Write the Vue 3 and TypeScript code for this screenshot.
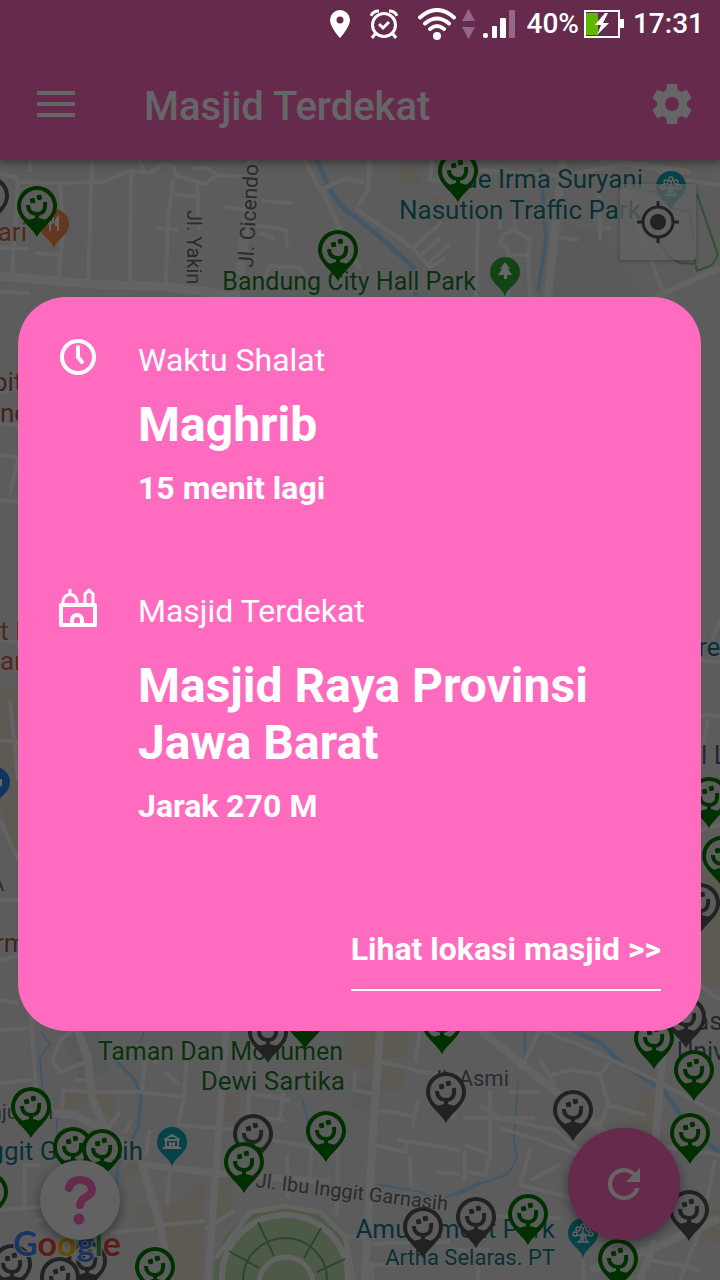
<script setup lang="ts">
interface Pin { x: number; y: number; kind: 'open' | 'closed' }
interface Label { text: string; x: number; y: number; cls: string; size: number; anchor?: 'start' | 'end'; rotate?: number }
interface Road { d: string; w: number }

const appTitle = 'Masjid Terdekat'
const prayer = { label: 'Waktu Shalat', name: 'Maghrib', remaining: '15 menit lagi' }
const nearest = { label: 'Masjid Terdekat', name: 'Masjid Raya Provinsi Jawa Barat', distance: 'Jarak 270 M' }

const roads: Road[] = [
  { d: 'M0 174 15 177 18 182 60 183 103 182 130 171 150 173 163 164 173 166 176 176 205 184 217 175 250 177', w: 4 },
  { d: 'M30 160v12M18 182 12 275M60 182 63 230 58 283M131 171 130 283M173 180 168 218M155 228 178 230M197 182 199 230M174 194 200 197M140 160 144 172', w: 4 },
  { d: 'M92 160 88 284M168 218 166 283M224 206 245 210M262 201 293 203M255 225 286 230 287 248M258 233 275 238', w: 4 },
  { d: 'M193 168 208 168 217 175 206 183M36 253 60 255M0 248 28 248M262 285 270 266 300 268 308 278', w: 4 },
  { d: 'M0 276 90 284 170 287 240 296M253 160 240 275', w: 9 },
  { d: 'M305 160 320 190 345 179 365 182M322 190 345 240 360 270M370 160 368 190 358 206', w: 5 },
  { d: 'M355 208 382 227 413 248 427 264 450 244M413 248 442 222M420 256 440 238M428 268 446 258M432 160 430 180 480 188', w: 4 },
  { d: 'M478 215 476 297M508 297V250L500 244 503 235 514 230 530 240 528 255 530 297M500 230V205M515 230V210M508 255H528', w: 4 },
  { d: 'M563 160 555 230 548 297', w: 8 },
  { d: 'M552 237 578 240M599 195 600 240M600 228H610M480 170 560 176 620 165M640 160 670 178 720 185M625 190 665 297', w: 4 },
  { d: 'M655 297 720 268M600 160 690 172', w: 6 },
  { d: 'M0 292 30 293M0 392 18 390M0 424 18 425M0 455 18 458 10 495M0 500 18 502M0 640 18 642M0 740 18 742M10 700 18 780M0 820 18 860M0 900H18M0 960 18 955M0 1000 18 1003', w: 4 },
  { d: 'M0 1030 32 1028M30 1000 36 1090 34 1112M0 1083 33 1080M52 1060 60 1040 80 1025M52 1060 60 1072 85 1062', w: 4 },
  { d: 'M34 1112 75 1115 105 1130 140 1157 160 1225 170 1280M75 1020 88 1060 92 1098 105 1128', w: 8 },
  { d: 'M62 1113 63 1090 92 1092 140 1092 186 1097M145 1060 142 1090M155 1065 153 1050M188 1040 184 1098 178 1125 240 1130M75 1080H86M165 1072 180 1085M25 1165 24 1207M25 1165H40M0 1210 60 1205M35 1220H60', w: 4 },
  { d: 'M226 1030 208 1280M145 1165 215 1173 330 1182', w: 7 },
  { d: 'M160 1225 205 1221M110 1232 155 1229M170 1170 167 1205M146 1155 150 1130M108 1128 120 1112M125 1133 132 1120M205 1230 235 1210', w: 4 },
  { d: 'M250 1040 248 1130M285 1080 280 1120M250 1093 290 1100M250 1117 285 1120M270 1140 315 1148M312 1130 310 1180M338 1125 337 1215M287 1155V1198M240 1160 265 1175', w: 4 },
  { d: 'M380 1030 373 1130 365 1280', w: 8 },
  { d: 'M381 1062 430 1073 470 1075M355 1070 354 1090 375 1094M375 1110 415 1116M412 1127 418 1100M375 1145 405 1152 408 1140M398 1140 460 1150M410 1155 411 1187M435 1172 460 1174M465 1150 464 1180M455 1100 453 1120M415 1062 420 1030', w: 4 },
  { d: 'M480 1030 560 1095 625 1150', w: 8 },
  { d: 'M520 1070 540 1030M540 1030 580 1045 655 1080 720 1115M550 1075 570 1070 600 1074 610 1062M600 1074 608 1105 645 1115M608 1105 600 1125M555 1085 540 1060', w: 4 },
  { d: 'M480 1105 500 1118 555 1130 580 1150M490 1090V1160M500 1128 540 1140 590 1160M530 1150 520 1185 580 1200M530 1180 560 1165M463 1118H535M465 1145 490 1155 485 1175 465 1172M510 1092H540', w: 4 },
  { d: 'M663 1050 655 1145M590 1270 650 1250 720 1218M655 1240 640 1280', w: 8 },
  { d: 'M620 1140 720 1155M715 1160 700 1230 680 1280M460 1215 560 1218M450 1250H490M583 1260V1280M650 1260 700 1270', w: 4 },
  { d: 'M345 1237 390 1237M365 1244 450 1242M372 1262V1280M372 1265H400M478 1265V1280M700 660 720 662M700 715 720 716M708 720 700 760M700 830 720 825M700 985 720 1000M712 640 720 620', w: 4 },
]

const rivers: Road[] = [
  { d: 'M317 160 330 190 345 210 362 222 390 246 414 268 416 297', w: 5 },
  { d: 'M541 168 546 240 538 292', w: 4 },
  { d: 'M42 1033 50 1044 40 1058 43 1095M57 1118V1145M145 1030 136 1055M302 1098 310 1130', w: 2 },
  { d: 'M115 1060 135 1080 141 1096 138 1128 118 1165 116 1200', w: 3 },
  { d: 'M525 1030V1062M518 1082 514 1140 517 1158 508 1174 480 1184 455 1196', w: 2 },
  { d: 'M376 1184 420 1192 440 1200 480 1182M372 1200 366 1280', w: 2 },
  { d: 'M573 1031 600 1042 620 1062 665 1092 690 1130 720 1152', w: 5 },
]

const blocks = [
  '400,163 422,165 420,184 399,182', '432,195 447,200 443,232 430,228', '560,165 598,168 596,186 558,182', '640,165 665,178 690,178 690,165',
  '65,1092 87,1092 87,1109 65,1107', '88,1092 115,1096 113,1118 92,1108', '122,1170 134,1160 142,1168 130,1180', '135,1205 160,1208 162,1226 140,1228',
  '150,1220 205,1180 202,1280 175,1280', '226,1090 240,1092 236,1120 224,1122', '220,1175 236,1175 230,1225 214,1225', '345,1031 378,1031 374,1070 346,1066',
  '382,1031 410,1031 404,1058 382,1056', '382,1064 406,1068 402,1092 380,1090', '645,1088 658,1095 650,1142 625,1128', '0,690 18,690 18,870 0,800',
  '700,870 720,870 720,990 700,980', '650,1031 664,1031 662,1070 648,1064', '700,1205 720,1210 720,1245 705,1238', '235,1040 248,1042 246,1060 234,1058',
]

const labels: Label[] = [
  { text: 'Ade Irma Suryani', x: 643, y: 188, cls: 'teal', size: 26, anchor: 'end' },
  { text: 'Nasution Traffic Park', x: 641, y: 219, cls: 'teal', size: 26, anchor: 'end' },
  { text: 'Bandung City Hall Park', x: 476, y: 290, cls: 'green', size: 25, anchor: 'end' },
  { text: 'Jl. Cicendo', x: 253, y: 268, cls: 'street', size: 21, rotate: -87 },
  { text: 'Jl. Yakin', x: 187, y: 210, cls: 'street', size: 20, rotate: 90 },
  { text: 'ari', x: 27, y: 241, cls: 'orange', size: 26, anchor: 'end' },
  { text: 'pit', x: -7, y: 391, cls: 'red', size: 26 },
  { text: 'ne', x: 0, y: 422, cls: 'red', size: 26 },
  { text: 't I', x: 0, y: 640, cls: 'orange', size: 26 },
  { text: 'ar', x: 0, y: 670, cls: 'orange', size: 26 },
  { text: 'rm', x: -5, y: 952, cls: 'red', size: 26 },
  { text: 'A', x: -10, y: 891, cls: 'street', size: 22 },
  { text: 're', x: 698, y: 656, cls: 'teal', size: 26 },
  { text: 'l L', x: 701, y: 764, cls: 'slate', size: 26 },
  { text: 'as', x: 695, y: 1030, cls: 'slate', size: 26 },
  { text: 'Univ', x: 677, y: 1060, cls: 'slate', size: 25 },
  { text: 'Taman Dan Monumen', x: 343, y: 1060, cls: 'green', size: 25, anchor: 'end' },
  { text: 'Dewi Sartika', x: 345, y: 1090, cls: 'green', size: 26, anchor: 'end' },
  { text: 'Jl. Asmi', x: 509, y: 1086, cls: 'street', size: 22, anchor: 'end' },
  { text: 'njunan', x: 53, y: 1119, cls: 'street', size: 21, anchor: 'end' },
  { text: 'Inggit Garnasih', x: 143, y: 1160, cls: 'teal', size: 26, anchor: 'end' },
  { text: 'Jl. Ibu Inggit Garnasih', x: 255, y: 1187, cls: 'street', size: 20, rotate: 7 },
  { text: 'Amusement Park', x: 555, y: 1238, cls: 'teal', size: 26, anchor: 'end' },
  { text: 'Artha Selaras. PT', x: 555, y: 1265, cls: 'teal', size: 22, anchor: 'end' },
]

const at = (kind: Pin['kind'], pts: [number, number][]): Pin[] => pts.map(([x, y]) => ({ x, y, kind }))
const pins: Pin[] = [
  ...at('closed', [[-11, 196], [12, 1264], [87, 1261], [60, 1277], [253, 1134], [268, 1032], [446, 1092], [573, 1110], [423, 1227], [476, 1217], [689, 1210], [700, 903], [686, 1017]]),
  ...at('open', [[37, 206], [338, 250], [458, 171], [709, 797], [722, 856], [305, 1018], [442, 1023], [654, 1038], [694, 1070], [690, 1133], [31, 1107], [73, 1147], [102, 1149], [-12, 1192], [155, 1267], [244, 1162], [326, 1131], [528, 1214], [618, 1259]]),
]

const logo = [
  { ch: 'G', color: '#4285f4' }, { ch: 'o', color: '#ea4335' }, { ch: 'o', color: '#fbbc05' },
  { ch: 'g', color: '#4285f4' }, { ch: 'l', color: '#34a853' }, { ch: 'e', color: '#ea4335' },
]
</script>

<template>
  <div class="screen">
    <header class="header">
      <div class="app-bar">
        <button class="icon-btn" type="button" aria-label="Menu">
          <svg width="38" height="28" viewBox="0 0 38 28"><path d="M0 3h38M0 14h38M0 25h38" stroke="#fff" stroke-width="4" /></svg>
        </button>
        <h1 class="title">{{ appTitle }}</h1>
        <button class="icon-btn" type="button" aria-label="Pengaturan">
          <svg width="48" height="48" viewBox="0 0 24 24" fill="#fff"><path d="M19.43 12.98c.04-.32.07-.64.07-.98s-.03-.66-.07-.98l2.11-1.65c.19-.15.24-.42.12-.64l-2-3.46c-.12-.22-.39-.3-.61-.22l-2.49 1c-.52-.4-1.08-.73-1.69-.98l-.38-2.65A.49.49 0 0 0 14 2h-4c-.25 0-.46.18-.49.42l-.38 2.65c-.61.25-1.17.59-1.69.98l-2.49-1c-.23-.09-.49 0-.61.22l-2 3.46c-.13.22-.07.49.12.64l2.11 1.65c-.04.32-.07.65-.07.98s.03.66.07.98l-2.11 1.65c-.19.15-.24.42-.12.64l2 3.46c.12.22.39.3.61.22l2.49-1c.52.4 1.08.73 1.69.98l.38 2.65c.03.24.24.42.49.42h4c.25 0 .46-.18.49-.42l.38-2.65c.61-.25 1.17-.59 1.69-.98l2.49 1c.23.09.49 0 .61-.22l2-3.46c.12-.22.07-.49-.12-.64l-2.11-1.65zM12 15.5a3.5 3.5 0 1 1 0-7 3.5 3.5 0 0 1 0 7z" /></svg>
        </button>
      </div>
    </header>

    <main class="map-area">
      <svg class="map" viewBox="0 160 720 1120" preserveAspectRatio="xMidYMid slice" role="img" aria-label="Peta">
        <defs>
          <g id="mosque-pin">
            <path d="M0 31C-5 21-20 13-20 0A20 20 0 1 1 20 0C20 13 5 21 0 31z" />
            <circle r="16" fill="#e6e6e6" />
            <path d="M-2 12h4l7 2-9 8-9-8z" />
            <path d="M-9-1C-9 5-5 8 0 8S9 5 8-4" fill="none" stroke="currentColor" stroke-width="4" />
            <path d="M0 8v10" stroke="currentColor" stroke-width="4" />
            <rect x="-7" y="-8" width="5" height="5" rx="1" transform="rotate(-12 -4 -6)" />
            <rect x="0" y="-11" width="5" height="5" rx="1" transform="rotate(-12 2 -8)" />
          </g>
          <g id="poi-pin"><path d="M0 25C-2 15-15 12-15 0A15 15 0 1 1 15 0C15 12 2 15 0 25z" /></g>
          <g id="tree-glyph" fill="none" stroke="#fff" stroke-width="1.5">
            <path d="M-4 9c3-2 3-5 2-9M4 9C2 6 2 3 2 0M-6 9H6M0 8V-5M-1 3-6 2M1 3 6 2" />
            <circle cx="0" cy="-7" r="2" /><circle cx="-5" cy="-4" r="2" /><circle cx="5" cy="-4" r="2" /><circle cx="-8" cy="1" r="2" /><circle cx="8" cy="1" r="2" />
          </g>
        </defs>

        <rect y="160" width="720" height="1120" fill="#e5e5e6" />
        <path d="M565 225 605 232 640 297H548z" fill="#dde0e6" />
        <path d="M60 1031h40l10 40-30 10zM350 1080l25 5-3 30-20-6z" fill="#dcdfe4" />
        <polygon v-for="b in blocks" :key="b" :points="b" fill="#e8e0d2" />
        <g fill="none" stroke="#aadaff">
          <path v-for="r in rivers" :key="r.d" :d="r.d" :stroke-width="r.w" />
        </g>
        <g fill="none" stroke="#f7f7f7" stroke-linejoin="round">
          <path v-for="r in roads" :key="r.d" :d="r.d" :stroke-width="r.w" />
        </g>

        <path d="M214 1280C212 1240 240 1208 285 1206S354 1236 356 1280z" fill="#c2e2b4" />
        <path d="M216 1258 250 1212 285 1206 320 1212 345 1237 354 1280" fill="none" stroke="#f7f7f7" stroke-width="5" />
        <circle cx="285" cy="1278" r="63" fill="#c2e2b4" stroke="#f7f7f7" stroke-width="6" />
        <g fill="none" stroke="#6fae72" stroke-width="2">
          <circle cx="285" cy="1280" r="42" />
          <path d="M258 1222 274 1256M321 1228 304 1258M229 1251 259 1268M345 1259 317 1272" />
        </g>
        <circle cx="286" cy="1284" r="27" fill="#c2e2b4" stroke="#f7f7f7" stroke-width="5" />
        <path d="M697 194 718 255 712 265 697 271 694 256M694 264 680 263 668 256 657 240M630 188 655 192 672 208 690 212 693 240" fill="none" stroke="#7fc78b" stroke-width="2" />

        <text
          v-for="l in labels" :key="l.text" :class="['label', l.cls]" :x="l.x" :y="l.y" :font-size="l.size"
          :text-anchor="l.anchor ?? 'start'" :transform="l.rotate ? `rotate(${l.rotate} ${l.x} ${l.y})` : undefined"
        >{{ l.text }}</text>

        <g transform="translate(671 186)"><use href="#poi-pin" fill="#12a5b8" /><use href="#tree-glyph" /></g>
        <g transform="translate(583 1233)"><use href="#poi-pin" fill="#12a5b8" /><use href="#tree-glyph" /></g>
        <g transform="translate(505 272)"><use href="#poi-pin" fill="#34a838" /><path d="M0-10 5-3H3L7 3H2V7h-3V3h-6l4-6h-2z" fill="#fff" /></g>
        <g transform="translate(172 1142)"><use href="#poi-pin" fill="#12a5b8" /><path d="M-8-2 0-7 8-2M-6-2V5H6V-2zM-9 6H9M-2 0V4M2 0V4M-2 2H2" fill="none" stroke="#fff" stroke-width="2" /></g>
        <g transform="translate(54 224)"><use href="#poi-pin" fill="#f58c4c" /><path d="M-4-7V7M-7-7V-2Q-4 1-1-2V-7M4 7V-7Q1-4 2 1H4" fill="none" stroke="#fff" stroke-width="2" /></g>
        <g transform="translate(-5 782)"><use href="#poi-pin" fill="#2f80ed" /><rect x="0" y="-3" width="7" height="7" fill="#fff" /></g>

        <g v-for="(p, i) in pins" :key="i" :class="['pin', p.kind]" :transform="`translate(${p.x} ${p.y})`"><use href="#mosque-pin" /></g>
        <text class="logo" x="13" y="1256" font-size="34"><tspan v-for="(g, i) in logo" :key="i" :fill="g.color">{{ g.ch }}</tspan></text>
      </svg>

      <button class="locate" type="button" aria-label="Lokasi saya">
        <svg width="42" height="42" viewBox="0 0 42 42" fill="none" stroke="#555" stroke-width="3">
          <circle cx="21" cy="21" r="15" /><circle cx="21" cy="21" r="8" fill="#555" stroke="none" /><path d="M21 0v6M21 36v6M0 21h6M36 21h6" />
        </svg>
      </button>
      <button class="help" type="button" aria-label="Bantuan">
        <svg width="34" height="50" viewBox="0 0 34 50"><path d="M6 13Q8 5 17 5C24 5 29 9 29 15 29 22 17 22 17 30" fill="none" stroke="#ff6cbf" stroke-width="8" stroke-linecap="round" /><circle cx="16" cy="44" r="5.5" fill="#ff6cbf" /></svg>
      </button>
      <button class="refresh" type="button" aria-label="Muat ulang">
        <svg width="48" height="48" viewBox="0 0 24 24" fill="#fff"><path d="M17.65 6.35A7.96 7.96 0 0 0 12 4a8 8 0 1 0 7.73 10h-2.08A6 6 0 1 1 12 6c1.66 0 3.14.69 4.22 1.78L13 11h7V4z" /></svg>
      </button>
    </main>

    <div class="scrim">
      <section class="card" role="dialog" aria-label="Info shalat">
        <div class="entry">
          <svg class="entry-icon" width="40" height="40" viewBox="0 0 40 40" fill="none" stroke="#fff" stroke-linecap="round"><circle cx="20" cy="20" r="16" stroke-width="4" /><path d="M20 10v10l4 5" stroke-width="4" /></svg>
          <div>
            <p class="caption">{{ prayer.label }}</p>
            <h2 class="name">{{ prayer.name }}</h2>
            <p class="detail">{{ prayer.remaining }}</p>
          </div>
        </div>
        <div class="entry place">
          <svg class="entry-icon" width="40" height="40" viewBox="0 0 40 40" fill="none" stroke="#fff" stroke-width="4" stroke-linejoin="round">
            <path d="M3 17h34v20H3z" /><path d="M5 17C3 3 21 3 19 17M12 7V1M27 17V6l4-4 4 4v11" stroke-width="3" /><path d="M14 36v-4a5 5 0 0 1 10 0v4" />
          </svg>
          <div>
            <p class="caption">{{ nearest.label }}</p>
            <h2 class="name">{{ nearest.name }}</h2>
            <p class="detail">{{ nearest.distance }}</p>
          </div>
        </div>
        <a class="link" href="#lokasi">Lihat lokasi masjid &gt;&gt;</a>
      </section>
    </div>

    <div class="status">
      <svg width="20" height="28" viewBox="0 0 20 28"><path fill="#fff" fill-rule="evenodd" d="M10 0A10 10 0 0 0 0 10c0 7 10 18 10 18s10-11 10-18A10 10 0 0 0 10 0zm0 6.5a3.5 3.5 0 1 1 0 7 3.5 3.5 0 0 1 0-7z" /></svg>
      <svg class="alarm" width="28" height="30" viewBox="0 0 28 30" fill="none" stroke="#fff" stroke-width="3"><circle cx="14" cy="16" r="11.5" /><path d="M1 7Q3 2 9 2M27 7Q25 2 19 2M5 25l-3 4M23 25l3 4" /><path d="M9 15l4 4 6-6" /></svg>
      <svg class="wifi" width="38" height="32" viewBox="0 0 38 32" fill="none" stroke="#fff" stroke-width="4" stroke-linecap="round"><path d="M2 9.5Q19-5.5 36 9.5M7 15.5Q19 5.5 31 15.5M12 21Q19 15 26 21" /><circle cx="19" cy="28" r="4" fill="#fff" stroke="none" /></svg>
      <svg class="traffic" width="13" height="32" viewBox="0 0 13 32"><path d="M6.5 1 13 13H0zM6.5 31 13 19H0z" fill="#93688a" /></svg>
      <svg class="signal" width="32" height="30" viewBox="0 0 32 30" fill="#fff"><rect y="24" width="5" height="5" rx="2" /><rect x="9" y="17" width="5" height="12" rx="1" /><rect x="17" y="9" width="6" height="20" rx="1" /><rect x="26" y="1" width="6" height="28" rx="1" fill="#93688a" /></svg>
      <span class="charge">40%</span>
      <svg class="battery" width="40" height="28" viewBox="0 0 40 28"><rect x="1" y="1" width="34" height="26" fill="none" stroke="#fff" stroke-width="2" /><rect x="2" y="3" width="12" height="22" fill="#5eb800" /><path d="M36 9h4v9h-4z" fill="#fff" /><path d="M21 3 11 15h6l-4 10 12-12h-6l5-10z" fill="#fff" /></svg>
      <time class="clock">17:31</time>
    </div>
  </div>
</template>

<style>
body { margin: 0; }
</style>

<style scoped>
.screen {
  position: relative;
  display: flex;
  flex-direction: column;
  min-height: 100vh;
  overflow: hidden;
  font-family: Roboto, "Liberation Sans", sans-serif;
  color: #fff;
}
button { border: 0; padding: 0; display: grid; place-items: center; }
.header {
  position: relative;
  z-index: 1;
  padding-top: 48px;
  background: #ff6cbf;
  box-shadow: 0 3px 8px rgba(0, 0, 0, 0.4);
}
.app-bar { display: flex; align-items: center; height: 112px; padding: 0 24px; }
.icon-btn { width: 64px; height: 64px; background: none; }
.icon-btn:last-child { width: 48px; }
.title { flex: 1; margin: 6px 0 0 56px; font-size: 40px; line-height: 48px; font-weight: 500; }

.map-area { position: relative; flex: 1; }
.map { position: absolute; inset: 0; width: 100%; height: 100%; }
.label { stroke: #ececec; stroke-width: 3px; stroke-linejoin: round; paint-order: stroke; }
.teal { fill: #147888; }
.green { fill: #1c7c26; }
.street { fill: #666c74; }
.slate { fill: #546878; }
.orange { fill: #c8683c; }
.red { fill: #a85454; }
.open { color: #007800; fill: #007800; }
.closed { color: #555; fill: #555; }
.logo { font-family: Lato, sans-serif; font-weight: 700; stroke: #ececec; stroke-width: 2px; paint-order: stroke; }
.locate {
  position: absolute;
  top: 24px;
  right: 24px;
  width: 76px;
  height: 76px;
  border-radius: 2px;
  background: rgba(245, 245, 245, 0.7);
  box-shadow: 0 1px 4px rgba(0, 0, 0, 0.3);
}
.help, .refresh { position: absolute; bottom: 40px; border-radius: 50%; box-shadow: 0 4px 12px rgba(0, 0, 0, 0.4); }
.help { left: 40px; width: 80px; height: 80px; background: #f4f4f4; }
.refresh { right: 40px; width: 112px; height: 112px; background: #ff6cbf; }

.scrim {
  position: absolute;
  inset: 0;
  z-index: 2;
  display: flex;
  align-items: center;
  padding: 48px 19px 0 18px;
  background: rgba(0, 0, 0, 0.6);
}
.card {
  flex: 1;
  display: flex;
  flex-direction: column;
  padding: 40px;
  border-radius: 48px;
  background: #ff6cbf;
}
.entry { display: grid; grid-template-columns: 40px 1fr; column-gap: 40px; }
.place { margin-top: 81px; }
.caption, .name, .detail { margin: 0; }
.caption { font-size: 32px; line-height: 46px; }
.name { margin-top: 13px; font-size: 48px; line-height: 57px; font-weight: 700; }
.place .name { margin-top: 23px; }
.detail { margin-top: 16px; font-size: 32px; line-height: 38px; font-weight: 700; }
.link {
  align-self: flex-end;
  margin-top: 105px;
  padding-bottom: 21px;
  border-bottom: 2px solid #fff;
  color: #fff;
  font-size: 32px;
  line-height: 38px;
  font-weight: 700;
  text-decoration: none;
}

.status {
  position: absolute;
  top: 0;
  left: 0;
  right: 0;
  z-index: 3;
  display: flex;
  align-items: center;
  justify-content: flex-end;
  height: 48px;
  padding-right: 16px;
  font-size: 28px;
  line-height: 52px;
  font-weight: 500;
}
.alarm, .wifi { margin-left: 20px; }
.traffic { margin-left: 6px; }
.signal { margin-left: 8px; }
.charge { margin-left: 12px; }
.battery { margin-left: 5px; }
.clock { margin-left: 9px; }
</style>
